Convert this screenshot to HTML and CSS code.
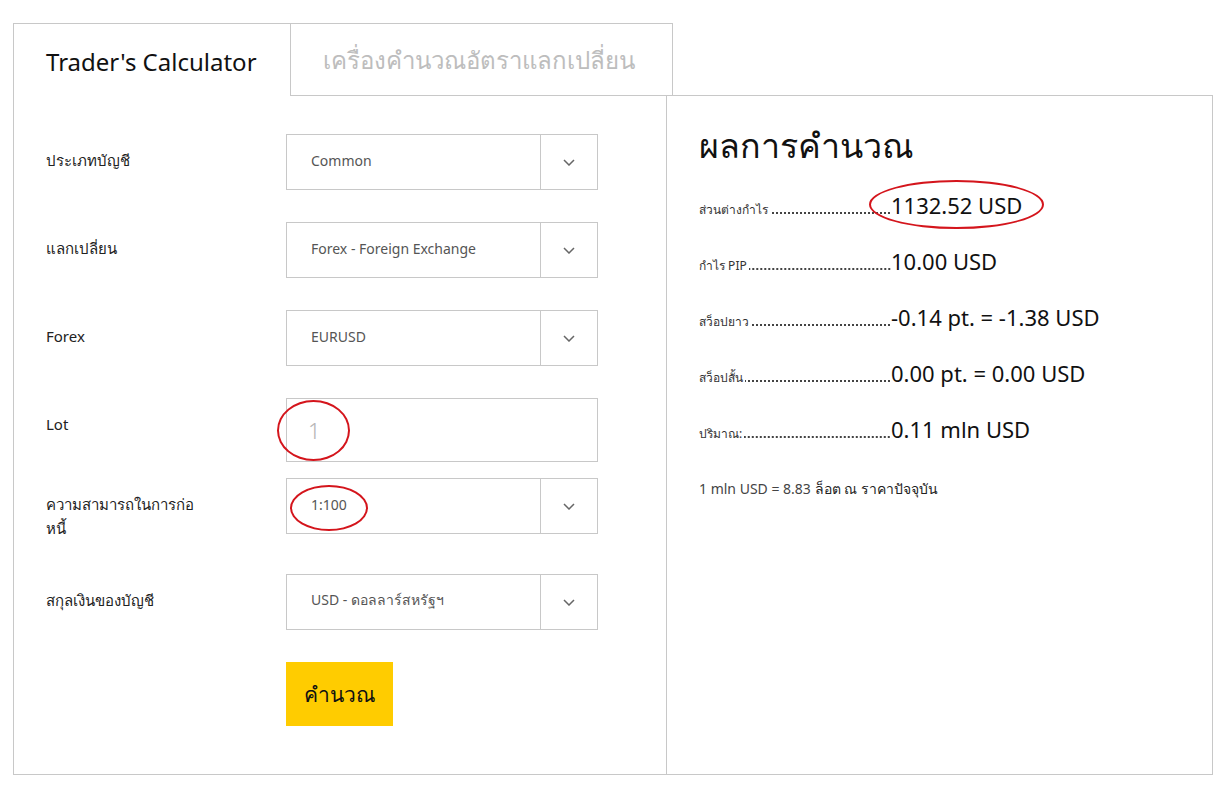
FILE: index.html
```html
<!DOCTYPE html>
<html lang="th">
<head>
  <meta charset="UTF-8" />
  <meta name="viewport" content="width=device-width, initial-scale=1" />
  <title>Trader's Calculator</title>
  <link rel="stylesheet" href="styles.css">
</head>
<body>
  <div class="calc">
    <div class="tabs">
      <div class="tab active">Trader's Calculator</div>
      <div class="tab">เครื่องคำนวณอัตราแลกเปลี่ยน</div>
    </div>

    <div class="calc-body">
      <form class="form-panel">
        <div class="row">
          <label class="row-label">ประเภทบัญชี</label>
          <div class="select">
            <span class="select-value">Common</span>
            <span class="select-arrow"><svg width="12" height="7" viewBox="0 0 12 7"><polyline points="1,1 6,6 11,1" /></svg></span>
          </div>
        </div>

        <div class="row">
          <label class="row-label">แลกเปลี่ยน</label>
          <div class="select">
            <span class="select-value">Forex - Foreign Exchange</span>
            <span class="select-arrow"><svg width="12" height="7" viewBox="0 0 12 7"><polyline points="1,1 6,6 11,1" /></svg></span>
          </div>
        </div>

        <div class="row">
          <label class="row-label">Forex</label>
          <div class="select">
            <span class="select-value">EURUSD</span>
            <span class="select-arrow"><svg width="12" height="7" viewBox="0 0 12 7"><polyline points="1,1 6,6 11,1" /></svg></span>
          </div>
        </div>

        <div class="row row-lot">
          <label class="row-label">Lot</label>
          <div class="field">
            <input class="lot-input" type="text" placeholder="1" />
            <span class="mark mark-lot"></span>
          </div>
        </div>

        <div class="row row-leverage">
          <label class="row-label"><span class="wrap">ความสามารถในการก่อหนี้</span></label>
          <div class="select">
            <span class="select-value">1:100</span>
            <span class="select-arrow"><svg width="12" height="7" viewBox="0 0 12 7"><polyline points="1,1 6,6 11,1" /></svg></span>
            <span class="mark mark-lev"></span>
          </div>
        </div>

        <div class="row">
          <label class="row-label">สกุลเงินของบัญชี</label>
          <div class="select">
            <span class="select-value">USD - ดอลลาร์สหรัฐฯ</span>
            <span class="select-arrow"><svg width="12" height="7" viewBox="0 0 12 7"><polyline points="1,1 6,6 11,1" /></svg></span>
          </div>
        </div>

        <div class="actions">
          <button type="button" class="btn-calc">คำนวณ</button>
        </div>
      </form>

      <div class="result-panel">
        <h2 class="result-title">ผลการคำนวณ</h2>

        <div class="res-row">
          <span class="res-label"><span>ส่วนต่างกำไร</span><span class="leader"></span></span>
          <span class="res-value">1132.52 USD<span class="mark mark-res"></span></span>
        </div>
        <div class="res-row">
          <span class="res-label"><span>กำไร PIP</span><span class="leader"></span></span>
          <span class="res-value">10.00 USD</span>
        </div>
        <div class="res-row">
          <span class="res-label"><span>สว็อปยาว</span><span class="leader"></span></span>
          <span class="res-value">-0.14 pt. = -1.38 USD</span>
        </div>
        <div class="res-row">
          <span class="res-label"><span>สว็อปสั้น</span><span class="leader"></span></span>
          <span class="res-value">0.00 pt. = 0.00 USD</span>
        </div>
        <div class="res-row">
          <span class="res-label"><span>ปริมาณ:</span><span class="leader"></span></span>
          <span class="res-value">0.11 mln USD</span>
        </div>

        <p class="res-note">1 mln USD = 8.83 <b>ล็อต ณ ราคาปัจจุบัน</b></p>
      </div>
    </div>
  </div>
</body>
</html>
```

FILE: styles.css
```css
body {
  margin: 0;
  background: #fff;
  font-family: "Noto Sans", "Open Sans", sans-serif;
  color: #1a1a1a;
}
.calc {
  width: 1200px;
  margin: 23px 0 0 13px;
}
.tabs {
  display: flex;
  height: 73px;
}
.tab {
  box-sizing: border-box;
  display: flex;
  align-items: center;
  padding: 2px 0 0 32px;
  font-size: 24px;
  color: #bdbdbd;
  border: 1px solid #c8c8c8;
  width: 383px;
}
.tab.active {
  width: 277px;
  color: #111;
  border-right: none;
  border-bottom: none;
}
.calc-body {
  display: flex;
  margin-top: -1px;
}
.form-panel {
  box-sizing: border-box;
  width: 653px;
  margin: 0;
  padding: 39px 0 48px 32px;
  border-left: 1px solid #c8c8c8;
  border-bottom: 1px solid #c8c8c8;
}
.row {
  display: flex;
  margin-bottom: 32px;
}
.row-lot {
  margin-bottom: 16px;
}
.row-leverage {
  margin-bottom: 34px;
}
.row-label {
  width: 240px;
  padding-top: 14px;
  font-size: 15px;
  line-height: 24px;
  color: #222;
}
.wrap {
  display: block;
  max-width: 158px;
}
.select,
.field {
  position: relative;
  box-sizing: border-box;
  width: 312px;
  height: 56px;
  border: 1px solid #c8c8c8;
  display: flex;
}
.select-value {
  flex: 1;
  padding: 0 0 4px 24px;
  display: flex;
  align-items: center;
  font-size: 14px;
  color: #555;
}
.select-arrow {
  width: 56px;
  border-left: 1px solid #c8c8c8;
  display: flex;
  align-items: center;
  justify-content: center;
}
.select-arrow polyline {
  fill: none;
  stroke: #666;
  stroke-width: 1.5;
}
.field {
  height: 64px;
}
.lot-input {
  width: 100%;
  border: none;
  outline: none;
  padding: 0 0 0 21px;
  font-family: inherit;
  font-size: 22px;
  font-weight: 300;
  color: #333;
  background: transparent;
}
.lot-input::placeholder {
  color: #b5b5b5;
}
.actions {
  padding-left: 240px;
}
.btn-calc {
  width: 107px;
  height: 64px;
  border: none;
  background: #ffcc00;
  font-family: inherit;
  font-size: 21px;
  font-weight: 500;
  color: #111;
  cursor: pointer;
}
.result-panel {
  box-sizing: border-box;
  width: 547px;
  padding: 29px 0 0 32px;
  border: 1px solid #c8c8c8;
}
.result-title {
  margin: 0 0 12px;
  font-size: 34px;
  line-height: 40px;
  font-weight: 500;
  color: #111;
}
.res-row {
  display: flex;
  align-items: baseline;
}
.res-label {
  display: flex;
  align-items: baseline;
  width: 192px;
  white-space: nowrap;
  font-size: 12px;
  color: #333;
}
.leader {
  flex: 1;
  height: 2px;
  margin-left: 2px;
  background-image: radial-gradient(circle, #444 0.8px, transparent 1.1px);
  background-size: 4px 2px;
  background-position: right bottom;
}
.res-value {
  position: relative;
  font-size: 22px;
  line-height: 56px;
  color: #111;
}
.res-note {
  margin: 22px 0 0;
  font-size: 14px;
  line-height: 20px;
  color: #444;
}
.res-note b {
  font-weight: 500;
  color: #222;
}
.mark {
  position: absolute;
  box-sizing: border-box;
  border: 2.5px solid #d4151c;
  border-radius: 50%;
  pointer-events: none;
}
.mark-lot {
  left: -10px;
  top: 1px;
  width: 73px;
  height: 61px;
}
.mark-lev {
  left: 3px;
  top: 6px;
  width: 78px;
  height: 46px;
}
.mark-res {
  left: -22px;
  top: 50%;
  margin-top: -25px;
  width: 175px;
  height: 49px;
}
```
